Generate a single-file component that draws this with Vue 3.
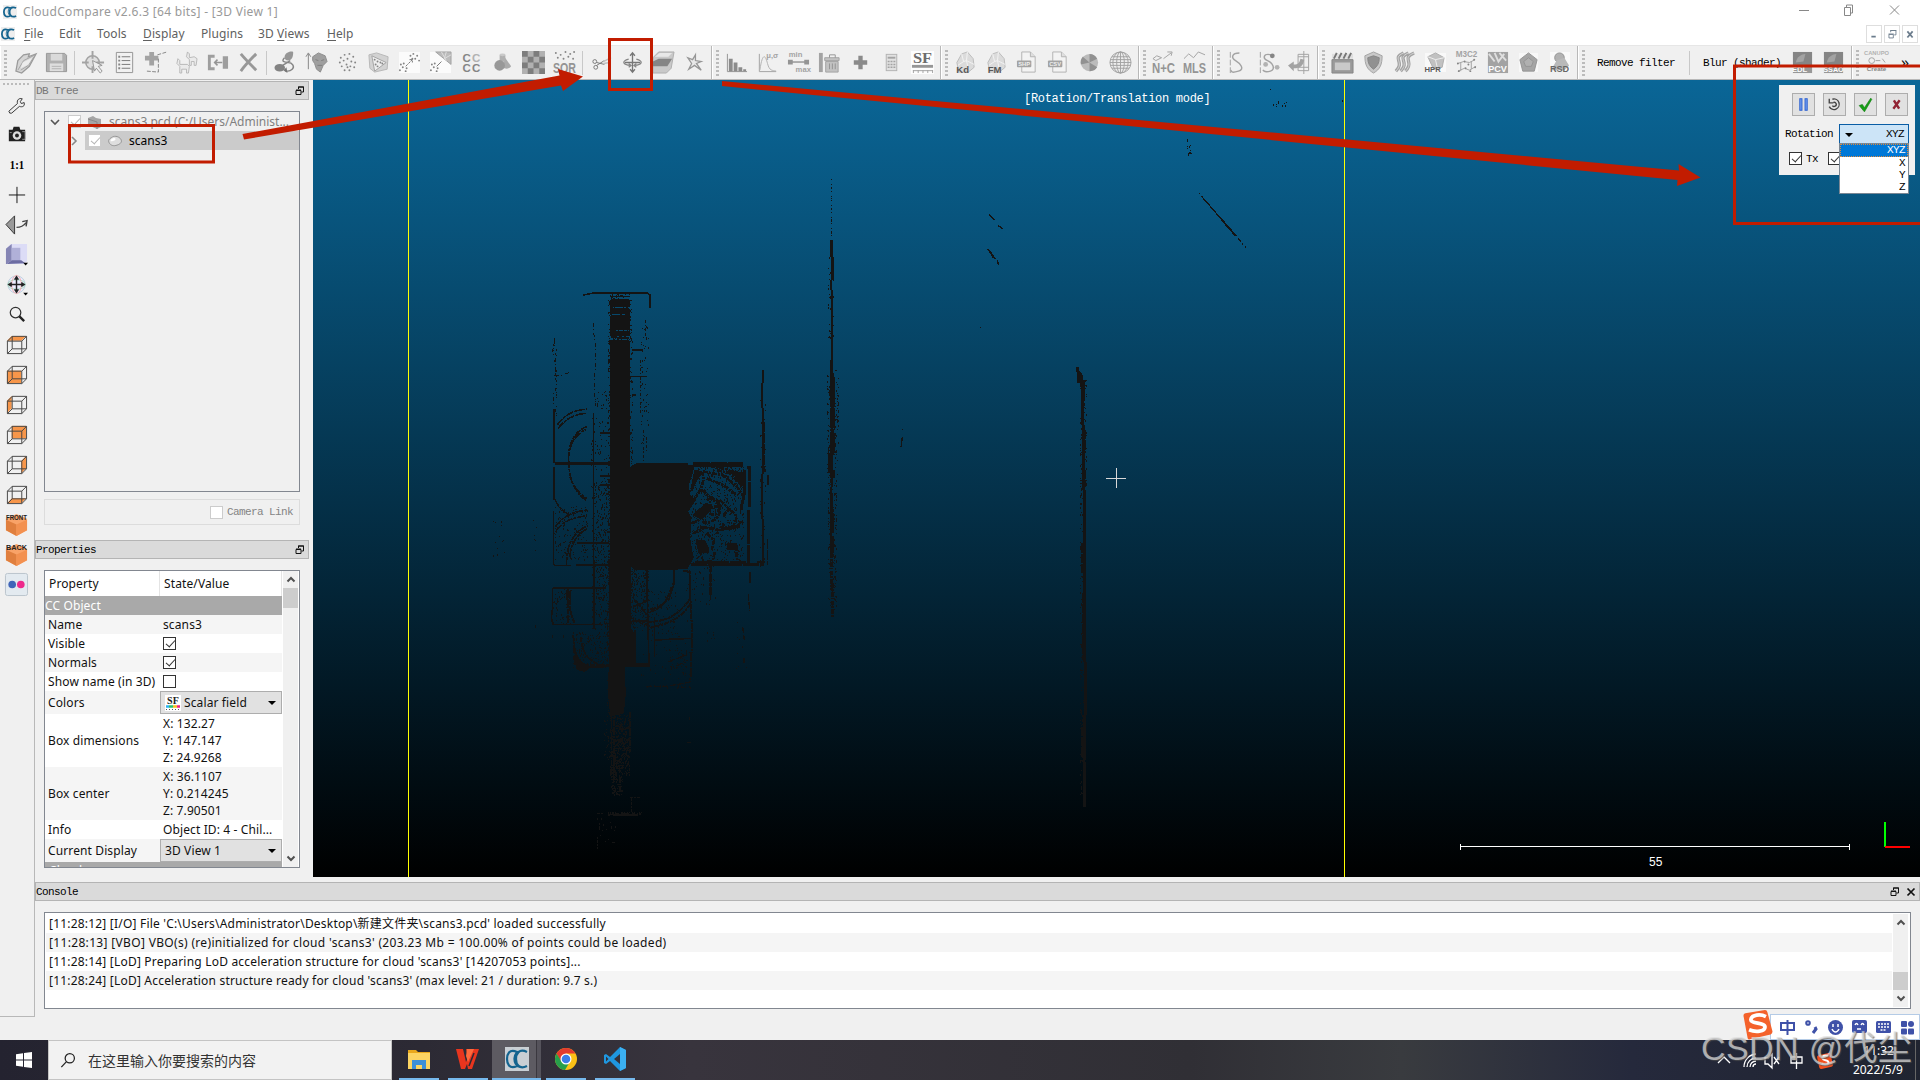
<template>
  <div class="desktop">
    <!-- Title bar -->
    <header class="title-bar">
      <svg class="app-icon" viewBox="0 0 16 16" v-html="glyphs.cc"></svg>
      <span class="title-text">CloudCompare v2.6.3 [64 bits] - [3D View 1]</span>
      <svg class="win-controls" viewBox="0 0 110 20">
        <path d="M9 10.500h10M54.500 7.500h6v8h-6zM56.500 7v-2h6v8h-2M100 5.500l9 9M109 5.500l-9 9" />
      </svg>
    </header>

    <!-- Menu bar -->
    <nav class="menu-bar">
      <svg class="app-icon" viewBox="0 0 16 16" v-html="glyphs.cc"></svg>
      <span v-for="m in menus" :key="m.text" class="menu-item" :class="m.cls">
        {{ m.pre }}<u v-if="m.key">{{ m.key }}</u>{{ m.post }}
      </span>
      <div class="mdi">
        <span class="mdi-btn"><svg viewBox="0 0 16 16"><path d="M5 11h5" stroke-width="2" /></svg></span>
        <span class="mdi-btn"><svg viewBox="0 0 16 16"><path d="M4.500 8.500h5v4h-5zM4 8h6M6.500 6v-2h6v5h-2M6 4h7" /></svg></span>
        <span class="mdi-btn"><svg viewBox="0 0 16 16"><path d="M5 5l6 7M11 5l-6 7" stroke-width="2" /></svg></span>
      </div>
    </nav>

    <!-- Main toolbars -->
    <div class="toolbars">
      <div v-for="(group, gi) in toolGroups" :key="gi" class="tool-group" :class="{ first: gi === 0 }">
        <i class="grip"></i>
        <template v-for="(name, i) in group" :key="i">
          <i v-if="name === '|'" class="sep"></i>
          <span v-else class="tool"><svg viewBox="0 0 24 24" v-html="icons[name]"></svg></span>
        </template>
      </div>
      <div class="tool-group filters">
        <i class="grip"></i>
        <span class="bitmap filter-btn">Remove filter</span>
        <i class="sep"></i>
        <span class="bitmap filter-btn blur">Blur (shader)</span>
        <span class="tool"><svg viewBox="0 0 24 24" v-html="icons.edl"></svg></span>
        <span class="tool"><svg viewBox="0 0 24 24" v-html="icons.ssao"></svg></span>
      </div>
      <div class="tool-group last">
        <i class="grip"></i>
        <span class="tool"><svg viewBox="0 0 24 24" v-html="icons.canupo"></svg></span>
        <span class="more">»</span>
      </div>
    </div>

    <!-- Workspace -->
    <div class="workspace">
      <aside class="side-tools">
        <i class="side-grip"></i>
        <span v-for="name in sideTools" :key="name" class="side-tool">
          <svg viewBox="0 0 24 24" v-html="sideIcons[name]"></svg>
        </span>
      </aside>

      <div class="right-area">
        <div class="upper">
          <div class="docks">
            <div class="dock-title dim bitmap">
              <span>DB Tree</span>
              <svg viewBox="0 0 10 10"><path d="M1 4.500h5v4h-5zM1 4h5M3.500 3v-2h5v5h-2M3 1h6" /></svg>
            </div>
            <div class="tree">
              <div class="tree-row root">
                <svg class="arrow" viewBox="0 0 10 10"><path d="M1 3l4 4 4-4" /></svg>
                <i class="check ticked faint"></i>
                <svg class="node" viewBox="0 0 16 14"><path d="M1 3l5-2 3 2 5 1v8l-4 2-9-4z" fill="#a5a5a5" /><path d="M1 4l9 3v7" stroke="#888" fill="none" /></svg>
                <span>scans3.pcd (C:/Users/Administ...</span>
              </div>
              <div class="tree-row child">
                <svg class="arrow" viewBox="0 0 10 10"><path d="M3 1l4 4-4 4" /></svg>
                <div class="selected">
                  <i class="check ticked faint"></i>
                  <svg class="node cloud" viewBox="0 0 18 14"><path d="M2 8c-1-3 3-5 5-6 4-1 8 1 9 4s-2 5-6 6-7-1-8-4z" fill="#dedede" stroke="#8d8d8d" /><path d="M4 7c0-2 3-4 5-3s-1 4-5 3z" fill="#fff" /></svg>
                  <span>scans3</span>
                </div>
              </div>
            </div>
            <div class="camera-link bitmap">
              <i class="check faint"></i>
              <span>Camera Link</span>
            </div>

            <div class="dock-title bitmap">
              <span>Properties</span>
              <svg viewBox="0 0 10 10"><path d="M1 4.500h5v4h-5zM1 4h5M3.500 3v-2h5v5h-2M3 1h6" /></svg>
            </div>
            <div class="props">
              <div class="props-body">
                <div class="props-head"><span>Property</span><span>State/Value</span></div>
                <div class="section">CC Object</div>
                <div v-for="(row, i) in properties" :key="row.label" class="prop" :class="[row.kind, { alt: i % 2 === 0 }]">
                  <span class="prop-label">{{ row.label }}</span>
                  <div class="prop-value">
                    <i v-if="row.kind === 'bool'" class="check" :class="{ ticked: row.value }"></i>
                    <div v-else-if="row.kind === 'combo'" class="combo">
                      <svg v-if="row.icon" viewBox="0 0 16 16" v-html="glyphs.sf"></svg>
                      <span>{{ row.value }}</span>
                      <b class="caret"></b>
                    </div>
                    <template v-else-if="row.kind === 'vector'">
                      <span v-for="v in row.value" :key="v">{{ v }}</span>
                    </template>
                    <span v-else>{{ row.value }}</span>
                  </div>
                </div>
                <div class="section clipped">Cloud</div>
              </div>
              <div class="scroll">
                <svg viewBox="0 0 10 10"><path d="M1.500 6.500l3.500-3.500 3.500 3.500" /></svg>
                <i class="thumb"></i>
                <svg class="down" viewBox="0 0 10 10"><path d="M1.500 3.500l3.500 3.500 3.500-3.500" /></svg>
              </div>
            </div>
          </div>

          <!-- 3D view -->
          <main class="view">
            <svg class="scene" viewBox="313 80 1607 797" shape-rendering="crispEdges">
              <path d="M408.500 80v797M1344.500 80v797" stroke="#ffff00" />
              <path :d="specks" fill="#141414" />
              <!-- upper half of the building -->
              <g transform="translate(520 270) scale(.33333)" fill="none" stroke="#141414" stroke-width="3">
                <path d="M272 90h56v20h-50v6h50v16h-56zM272 138h56v42h-40v5h40v12h-56zM270 212h58v780h-55z" fill="#141414" />
                <path d="M290 205h38M272 200h20" stroke-width="6" />
                <path d="M330 592l22-12h150v6h22v-6h145v10h-148l-6 26-10 30 4 30 18 14-18 26-6 8 10 20-4 60 10 60-16 30-60 6-90-2-24-10z" fill="#141414" />
                <path d="M190 75l30-6h162l8 6v40M272 80h58M103 418v160M103 590v100M101 722v160l5 5h46M221 430v560M105 578h166M104 583h166" stroke-width="5" />
                <path d="M104 205l-6 40 8 20v45l4 40-10 20v40M105 318l20-3 25-8M220 160v20l8 60-6 130 12 40" stroke-dasharray="12 6 3 9" />
                <path d="M112 465c20-30 50-46 88-47M114 476c22-30 50-44 86-46M146 570c-2-50 20-90 56-100M150 540c5-30 25-50 48-62M146 570c0 60 20 100 56 124M150 620c12 34 30 54 52 66M105 688c10 24 24 38 44 46M106 770c26-36 60-46 98-50M108 782c24-30 50-40 92-44M140 885c-2-60 20-100 64-118M150 860c2-40 24-70 52-84" stroke-width="5" stroke-dasharray="24 3 9 2" />
                <path d="M520 580h150M680 592h8v120M687 720v165M512 884h220M525 878h165M675 600v60l-12 60" stroke-width="9" stroke-dasharray="50 2" />
                <path d="M524 640c10-30 30-40 26-10s-30 60-36 70M548 604l60 12 40 30 20 30M570 588l50 10 46 50M560 625l50 20 40 30M590 600l60 15 18 40M545 660l60 50M514 760c40-10 60-60 80-50s-10 60-50 45M560 690c20-10 45 0 38 25s-30 25-38 0M612 740c4-30 36-20 36 5s-30 40-40 15M600 690l40 40M540 770l60 10 60-10M520 790l40-20M600 770c30 15 58 0 64-20M530 815l20 60M620 830h30v30M585 845l-10 40M560 790l22 20-6 30" stroke-width="8" stroke-dasharray="16 3 7 2" />
                <path d="M530 812h24l12 24v12h-30zM622 820h28v20h-26zM556 700l20 5-6 20-30 20-20-10zM524 600l20 5-20 40-12 20zM630 600l40 10v40z" fill="#141414" />
                <path d="M728 300v40M727 340v60l2 50v120l-3 90 4 220" stroke-width="6" />
                <path d="M732 455v90l3 60M744 615v30M742 808v78M710 876h24" stroke-width="4" stroke-dasharray="30 3" />
                <path d="M335 320h45M335 240h34M240 490h30M240 618h30M240 645h30M172 820h96M168 886h100M100 954h158M98 954v40M335 376h12" stroke-width="5" />
                <path d="M370 480v100M376 150v30l4 30M363 270v160M380 500v50" stroke-dasharray="9 5 4 7" />
                <path d="M381 900v92M460 900l3 40-18 52M508 900l4 92M572 890v100M690 905v35M141 960v30" stroke-width="5" />
              </g>
              <!-- lower half of the building -->
              <g transform="translate(520 560) scale(.33333)" fill="none" stroke="#141414" stroke-width="3">
                <path d="M270 0h62v210l14 10v100h-34l4 80-6 60-38 8-8-80 4-70z" fill="#141414" />
                <path d="M98 84h160M98 84v60l-4 30 6 20M98 194h150M222 0v206M381 30l2 130 4 155M404 170v120M345 210v100M335 184h45M405 240l110-5M300 314h88" stroke-width="5" />
                <path d="M143 88v100M152 90c-6 40-3 70 12 98M463 30c2 50-14 110-72 118M455 80c-10 35-30 70-70 76M512 130c-25 40-60 62-122 72M508 120c-30 40-60 62-118 66M490 32l20 4 2 110 5 70-6 150M160 226l6 90M182 230c6 50 20 72 60 86M345 120l40 50M340 140l48-20M180 316h80" stroke-width="6" stroke-dasharray="17 2 8 2" />
                <path d="M160 230c6 60 20 80 48 90l60-6v6l-60 4-14 10-24-6zM350 310h38v10h-40z" fill="#141414" />
                <path d="M571 0v120M690 40v30M685 102l4 50M668 200l5 40M672 295v15M377 380h60l74-14M445 305l55-20M470 318l26-12M508 470v10M502 547h12" stroke-width="4" stroke-dasharray="20 4" />
                <path d="M572 0v110" stroke-width="9" stroke-dasharray="24 4 8 5" />
                <path d="M275 460v200M330 455v120M290 500h20M290 540h40M280 565h45M280 610h20M300 650v50M282 480v180" stroke-width="4" stroke-dasharray="18 3 5 2" />
                <path d="M268 763h95M232 760h16M330 712h30M334 715v44M240 788v20M232 840v28M255 846h4M276 848h8M46 195v10M97 226v10M132 226v12" stroke-dasharray="8 3" />
                <path d="M280 764h70" stroke-width="6" />
              </g>
              <!-- walls to the right -->
              <g transform="translate(800 160) scale(.33333)" fill="none" stroke="#141414" stroke-width="3">
                <path d="M94 57v60M94 120v110" stroke-dasharray="3 12 3 5 8 4" />
                <path d="M95 240v50M98 290v70M94 360v30M97 390v120M96 510v80M96 590v70M98 640v70M97 700v110M98 810v75M94 880v60M97 930v50M94 980v200" stroke-width="7" />
                <path d="M98 310v50M96 600v50" stroke-width="9" />
                <path d="M97 650v160M99 820v65M93 880v60M98 930v25" stroke-width="15" stroke-dasharray="60 2 30 3" />
                <path d="M98 1060v120M95 1000v90" stroke-width="10" stroke-dasharray="60 9" />
                <path d="M95 1180v110M97 1270v100" stroke-width="9" stroke-dasharray="14 3 5 4" />
                <path d="M833 622v12l10 10 5 60v60l2 60v120l4 90v350l2 240-4 180 2 136" stroke-width="9" />
                <path d="M848 660v60M853 810v70M852 930v50M836 640v30M850 1150v90M849 1700v90M852 1300v200" stroke-width="12" stroke-dasharray="28 3" />
                <path d="M1198 100h2M1204 108l104 120M1313 236l10 8M1326 250l4 4M1336 258v6M568 163l16 18M594 196l14 10M562 266l24 30M592 300l3 14M307 807v3M307 832l-4 30M540 502h3" stroke-width="4" />
                <path d="M568 272l14 22M1264 178l44 50" stroke-width="6" />
              </g>
              <path class="cursor" d="M1106 478.500h20M1116.500 468v20" />
              <path d="M1460 846.500h390M1460.500 843.500v6M1849.500 843.500v6" stroke="#fff" fill="none" />
              <path d="M1885 822v25" stroke="#00ff00" stroke-width="2" />
              <path d="M1885 847h25" stroke="#ff0000" stroke-width="2" />
            </svg>
            <span class="mode-label">[Rotation/Translation mode]</span>
            <span class="scale-label">55</span>

            <!-- transform tool panel -->
            <div class="transform">
              <div class="transform-btns">
                <span><svg viewBox="0 0 20 20"><path d="M6.500 4.500h2v11h-2zM11.500 4.500h2v11h-2z" fill="#7ba6f5" stroke="#2a5fd0" /></svg></span>
                <span><svg viewBox="0 0 20 20"><path d="M8 5a5 5 0 1 1-3 7M9 8a2 2 0 1 1-1 3M5 4.500v4h4" fill="none" stroke="#444" stroke-width="1.300" /></svg></span>
                <span><svg viewBox="0 0 20 20"><path d="M4 11l3-1 2 3 6-9 1 1-7 12z" fill="#16a016" stroke="#0c7a0c" stroke-width=".6" /></svg></span>
                <span><svg viewBox="0 0 20 20"><path d="M7.500 6l5 8M13 6l-6 8" stroke="#922434" stroke-width="2.300" /></svg></span>
              </div>
              <div class="transform-row bitmap">
                <span>Rotation</span>
                <div class="axis-combo">
                  <b class="caret"></b><span>XYZ</span>
                  <ul class="axis-list">
                    <li v-for="a in ['XYZ', 'X', 'Y', 'Z']" :key="a" :class="{ current: a === 'XYZ' }">{{ a }}</li>
                  </ul>
                </div>
              </div>
              <div class="transform-row checks bitmap">
                <i class="check ticked"></i><span>Tx</span><i class="check ticked"></i>
              </div>
            </div>
          </main>
        </div>

        <!-- Console -->
        <section class="console">
          <div class="dock-title bitmap">
            <span>Console</span>
            <svg viewBox="0 0 10 10"><path d="M1 4.500h5v4h-5zM1 4h5M3.500 3v-2h5v5h-2M3 1h6" /></svg>
            <svg viewBox="0 0 10 10"><path d="M1.500 1.500l7 7M8.500 1.500l-7 7" stroke-width="1.700" /></svg>
          </div>
          <div class="log">
            <div class="log-lines">
              <p v-for="line in logLines" :key="line">{{ line }}</p>
            </div>
            <div class="scroll">
              <svg viewBox="0 0 10 10"><path d="M1.500 6.500l3.500-3.500 3.500 3.500" /></svg>
              <i class="thumb low"></i>
              <svg class="down" viewBox="0 0 10 10"><path d="M1.500 3.500l3.500 3.500 3.500-3.500" /></svg>
            </div>
          </div>
        </section>
      </div>
    </div>

    <!-- Taskbar -->
    <footer class="taskbar">
      <span class="start"><svg viewBox="0 0 16 16"><path d="M0 2.300l7-1v6.200H0zM8 1.100L16 0v7.500H8zM0 8.500h7v6.200l-7-1zM8 8.500h8V16l-8-1.100z" fill="#fff" /></svg></span>
      <div class="search">
        <svg viewBox="0 0 18 18"><circle cx="11" cy="6.500" r="5.200" /><path d="M7.300 10.300L1.500 16.500" /></svg>
        <span>在这里输入你要搜索的内容</span>
      </div>
      <span v-for="name in taskApps" :key="name" class="task-app" :class="name">
        <svg viewBox="0 0 24 24" v-html="taskIcons[name]"></svg>
      </span>
      <div class="tray">
        <svg class="tray-icons" viewBox="0 0 130 30">
          <path d="M4 17l6-6 6 6M33 21a9 9 0 0 1 9-9M30 21a13 13 0 0 1 12-13M36 21a6 6 0 0 1 6-6M39 21a3 3 0 0 1 3-3M51 12h3l4-4v14l-4-4h-3zM60 11l5 7M65 11l-5 7M77 11h11v6H77zM82.500 7v16" />
          <rect x="104" y="8" width="14" height="14" rx="2" fill="#f4511e" stroke="none" transform="rotate(-12 111 15)" />
          <path d="M114.500 10.500c-3-2-7-.5-6 2s6 1 6 4-5 3-7 1" stroke="#fff" stroke-width="2" />
        </svg>
        <div class="clock"><span>11:32</span><span>2022/5/9</span></div>
      </div>
    </footer>

    <!-- Input method bar -->
    <div class="ime">
      <svg viewBox="0 0 150 26">
        <g fill="none" stroke="#3f51a8" stroke-width="2">
          <path d="M10 8h13v7H10zM16.500 5v15" />
          <circle cx="37" cy="8" r="1.800" /><path d="M44 12l1 2-3 4" stroke-width="3" />
        </g>
        <g fill="#3f51a8">
          <circle cx="64.500" cy="12.500" r="7.500" />
          <rect x="81" y="5" width="15" height="13" rx="2" />
          <rect x="105" y="6" width="15" height="12" rx="1.500" />
          <rect x="130" y="6" width="6" height="6" rx="1" /><rect x="137" y="6" width="6" height="6" rx="3" />
          <rect x="130" y="13.500" width="6" height="6" rx="1" /><rect x="137" y="13.500" width="6" height="6" rx="1" />
        </g>
        <path d="M62 9v3M67 9v3M61 14c2 4 5 4 7 0M84 10c1-2 2-2 3 0M90 10c1-2 2-2 3 0M86 14h4" stroke="#fff" stroke-width="1.500" fill="none" />
        <path d="M107 9h11M107 12h11M109.500 15h6" stroke="#fff" stroke-width="1.500" stroke-dasharray="2 1" />
      </svg>
    </div>
    <svg class="sogou" viewBox="0 0 32 32">
      <path d="M1 6q0-2 2-2.500L24 0q2 0 2.500 2L32 23q0 2-2 3L9 31q-3 1-3.500-1z" fill="#f4622b" />
      <path d="M25 7c-6-3-15-2-16 3s15 3 15 8-10 6-17 3" fill="none" stroke="#fff" stroke-width="4" />
    </svg>
    <div class="watermark">CSDN @伐尘</div>

    <!-- Red annotation marks -->
    <svg class="marks" viewBox="0 0 1920 1080">
      <g fill="none" stroke="#c21c00" stroke-width="3">
        <path d="M69.500 125.500h144v36.500h-144zM609.500 39.500h42v50h-42zM1925 66h-190.500v157.500h190.500" />
      </g>
      <g fill="#c21c00">
        <path d="M242.500 134L559.500 75.500 558 69 583 76.500 563 91 561 85.500 244 139.500z" />
        <path d="M722 81L1679 170.500 1678.500 164 1700.500 177.500 1677 186 1677.500 180 722 86z" />
      </g>
    </svg>
  </div>
</template>

<script setup>
import { computed } from 'vue'

/* ------------------------
   Menu / toolbars
------------------------ */
const menus = [
  { text: 'File', pre: '', key: 'F', post: 'ile', cls: 'm-file' },
  { text: 'Edit', pre: 'Edit', cls: 'm-edit' },
  { text: 'Tools', pre: 'Tools', cls: 'm-tools' },
  { text: 'Display', pre: '', key: 'D', post: 'isplay', cls: 'm-display' },
  { text: 'Plugins', pre: 'Plugins', cls: 'm-plugins' },
  { text: '3D Views', pre: '3D ', key: 'V', post: 'iews', cls: 'm-views' },
  { text: 'Help', pre: '', key: 'H', post: 'elp', cls: 'm-help' },
]

const toolGroups = [
  ['open', 'save', '|', 'pick', 'list', 'level', 'clone', 'merge', 'remove', '|',
    'sheep', 'normals', 'sample', 'meshSample', 'c2c', 'c2m', 'cccc', 'primitive', 'checker', 'sor', '|',
    'segment', 'move', 'section', 'pointPick'],
  ['hist', 'stats', 'minmax', 'trash', 'plus', 'calc', 'sf'],
  ['kd', 'fm', 'shp', 'csv', 'pie', 'globe'],
  ['nc', 'mls'],
  ['curve', 'curvePts', 'unroll'],
  ['clap', 'shield', 'waves', 'hpr', 'm3c2', 'pcv', 'penta', 'rsd'],
]

const dots = pts => pts.map(([x, y]) => `<circle cx="${x}" cy="${y}" r="1" fill="#777"/>`).join('')
const label = (x, y, size, text, fill = '#777') =>
  `<text x="${x}" y="${y}" font-size="${size}" font-weight="bold" font-family="Liberation Sans, sans-serif" text-anchor="middle" fill="${fill}">${text}</text>`
const wide = (y, text) =>
  `<text x="0" y="${y}" font-size="16" font-weight="bold" textLength="24" lengthAdjust="spacingAndGlyphs" font-family="Liberation Sans, sans-serif" fill="#888">${text}</text>`
const doc = text =>
  `<path d="M6 1h9l5 5v16H6z" fill="#f4f4f4" stroke="#aaa"/><path d="M15 1v5h5" fill="#ddd" stroke="#aaa"/><rect x="1" y="10" width="15" height="7" rx="1" fill="#999"/>${label(8.5, 16, 6, text, '#eee')}`
const stones = '<path d="M3 12l5-9 6-2 6 7 1 9-6 5H5z" fill="#d9d9d9" stroke="#b5b5b5"/><path d="M8 3l2 8-6 4M14 1l-1 9 8 4M10 11l3-1 2 9" fill="none" stroke="#f3f3f3"/>'

const icons = {
  open: '<path d="M2 21L4 10l6-6 6-1-1 3 8-3-7 13-8 7z" fill="#d2d2d2" stroke="#8f8f8f" stroke-width="1.300"/><path d="M4 20l6-10L22 4M7 20l8-5 6-9" fill="none" stroke="#999"/><path d="M9 12l10-5-4 7-8 4z" fill="#ececec"/>',
  save: '<path d="M1.500 2.500h19l2 2v17h-21z" fill="#a8a8a8" stroke="#8b8b8b"/><path d="M6 3h12v7H6z" fill="#d8d8d8"/><path d="M5 13h14v8H5z" fill="#dcdcdc"/><path d="M7 16h10M7 18.500h10" stroke="#aaa"/>',
  pick: '<circle cx="11" cy="12" r="7" fill="#ddd" stroke="#999" stroke-width="1.600"/><path d="M11 0v8M11 16v7M0 12h7M15 12h8" stroke="#999" stroke-width="2"/><path d="M11 10l10 5-4 1 4 5-2 2-4-5-2 3z" fill="#eee" stroke="#888"/>',
  list: '<path d="M3.500 1.500h17v21h-17z" fill="#f2f2f2" stroke="#888"/><path d="M9 6h9M9 10h9M9 14h9M9 18h9" stroke="#666"/><path d="M5.500 6h2M5.500 10h2M5.500 14h2M5.500 18h2" stroke="#777" stroke-width="2"/>',
  level: '<path d="M8 1v14M1 7.500h14" stroke="#999" stroke-width="5"/><path d="M14 4l10-3M15 8v14l-12-1" fill="none" stroke="#777" stroke-dasharray="4 1.500"/>',
  clone: '<path d="M13 1l2 2v4l5-1 3 2-1 7h-2v-4h-3v4h-2v-6l-3-3zM3 8l2 2v4h8l2 2-1 7h-2v-4H7v4H5v-7l-3-3z" fill="#eaeaea" stroke="#aaa" stroke-width=".9"/>',
  merge: '<path d="M9 5.500H3.500v13H9M19 7h2.500v10H19z" fill="none" stroke="#939393" stroke-width="3"/><path d="M17 12H9M12 9l-3 3 3 3" fill="none" stroke="#888" stroke-width="1.600"/>',
  remove: '<path d="M4 3c5 6 10 11 16 17M20 3C15 8 9 14 4 21" stroke="#8c8c8c" stroke-width="3" fill="none"/>',
  sheep: '<ellipse cx="6" cy="17.500" rx="5.500" ry="4" fill="#747474"/><path d="M11 6c1-5 7-6 9-5 0 5-1 8-5 9-3 0-4-2-4-4z" fill="#8a8a8a"/><path d="M11 7c-4 4 0 5 4 5s7 4 4 7-7 2-8 1M17 10l-8 5" fill="none" stroke="#777" stroke-width="1.500"/><path d="M13 17l-3 3 4 3z" fill="#666"/>',
  normals: '<path d="M3.500 19V3M1 6l2.500-4L6 6" fill="none" stroke="#777"/><path d="M8 6l6-4 7 3 2 6-4 4-3 7-4-3-2-6-2-3z" fill="#949494" stroke="#7f7f7f"/><path d="M11 9l3 1M17 10l3-1M13 15h5" stroke="#6e6e6e"/>',
  sample: dots([[5, 7], [9, 4], [14, 3], [18, 6], [4, 12], [8, 10], [12, 8], [16, 11], [20, 12], [6, 16], [11, 14], [15, 16], [19, 17], [9, 20], [14, 20], [12, 17]]),
  meshSample: '<path d="M2 4l8-2 12 4-1 13-13 3-5-4z" fill="#cfcfcf" stroke="#b0b0b0"/><path d="M5 5l15 7-12 9z" fill="#eee" stroke="#999"/>' + dots([[8, 9], [11, 11], [14, 12], [9, 14], [11, 16], [16, 13]]),
  c2c: '<rect x="1" y="1" width="22" height="22" fill="#fdfdfd"/>' + dots([[16, 3], [20, 5], [13, 5], [18, 8], [22, 10], [15, 8], [3, 14], [5, 17], [2, 20], [8, 21], [6, 13], [9, 18]]) + '<path d="M8 16l7-7M12 9h3v3" fill="none" stroke="#666" stroke-dasharray="3 1"/>',
  c2m: '<rect x="1" y="1" width="22" height="22" fill="#fdfdfd"/><path d="M7 1h16v13z" fill="#b5b5b5" stroke="#999"/><path d="M13 1l5 9M18 1l-2 7 7-4" stroke="#ddd" fill="none"/>' + dots([[3, 14], [5, 17], [2, 20], [8, 21], [6, 13], [9, 18]]) + '<path d="M8 16l5-5" stroke="#666"/>',
  cccc: label(7, 11, 12, 'C') + label(17, 11, 12, 'C', '#aaa') + label(7, 22, 12, 'C') + label(17, 22, 12, 'C'),
  primitive: '<path d="M14 6l7 10c-2 3-6 3-9 1z" fill="#a2a2a2"/><path d="M9 4h6v7H9z" fill="#a8a8a8"/><ellipse cx="12" cy="4" rx="3" ry="1.500" fill="#c4c4c4"/><circle cx="9" cy="15" r="5.500" fill="#8c8c8c"/>',
  checker: '<path d="M0 0h24v24H0z" fill="#a9a9a9"/><path d="M0 0h6v6H0zM12 0h6v6h-6zM6 6h6v6H6zM18 6h6v6h-6zM0 12h6v6H0zM12 12h6v6h-6zM6 18h6v6H6zM18 18h6v6h-6z" fill="#6e6e6e"/>',
  sor: dots([[3, 2], [8, 4], [13, 1], [18, 3], [22, 1], [5, 7], [16, 6], [21, 8], [11, 8]]) + wide(23, 'SOR'),
  segment: '<circle cx="6" cy="17" r="2" fill="none" stroke="#666"/><circle cx="5" cy="11" r="2" fill="none" stroke="#666"/><path d="M7 15l8-5M7 12l8 2" stroke="#666" fill="none"/><path d="M14 11l8-4M14 13l7-1" stroke="#bbb" stroke-width="1.500"/>',
  move: '<path d="M12 2v20M4 12h16M9.500 5l2.500-3 2.500 3M9.500 19l2.500 3 2.500-3" fill="none" stroke="#666" stroke-width="1.400"/><path d="M8 8.500c-8 2-6 6 2 6.500M16 8.500c8 2 6 6-2 6.500M8 13l2.500 2L8 17M16 13l-2.500 2 2.500 2" fill="none" stroke="#777" stroke-width="1.300"/>',
  section: '<path d="M1 7l6-6h16l-3 17-5 5H1z" fill="#c4c4c4" stroke="#a5a5a5"/><path d="M1 11l6-3h14l-5 8H1z" fill="#777"/><path d="M3 6l5-4h13l-4 4z" fill="#e8e8e8"/>',
  pointPick: '<path d="M5 7l5 2 3-5 0 6 6 1-5 2 5 7-7-5-6 4 3-6z" fill="#e8e8e8" stroke="#8a8a8a" stroke-width="1.300"/>',
  hist: '<path d="M2.500 3v18.500H23" fill="none" stroke="#888"/><path d="M4 8h4v13H4zM9 12h4v9H9zM14 17h4v4h-4zM19 19h3v2h-3z" fill="#7e7e7e"/>',
  stats: '<path d="M3.500 3v18.500H21" fill="none" stroke="#999"/><path d="M4 20C7 0 10 5 12 13s5 7 9 8" fill="none" stroke="#aaa"/>' + label(17, 7, 8, 'μ,σ', '#999'),
  minmax: label(9, 6, 8, 'min', '#999') + label(17, 22, 8, 'max', '#999') + '<path d="M3 11.500h17" stroke="#888" stroke-width="1.500"/><path d="M1 9h5v5H1zM18 9h5v5h-5z" fill="#888"/>',
  trash: '<path d="M1 2h4v20H1z" fill="#999"/><path d="M7 7h15v3H7zM8 11h13v11H8z" fill="#bcbcbc" stroke="#999"/><path d="M12 13v6M15 13v6M18 13v6M12 7V4h6v3" fill="none" stroke="#888"/>',
  plus: '<path d="M12 5v14M5 12h14" stroke="#7c7c7c" stroke-width="4.500"/>',
  calc: '<rect x="6.500" y="3.500" width="11" height="17" fill="#e0e0e0" stroke="#aaa"/><path d="M8 7h8" stroke="#999" stroke-width="2"/><path d="M8 11h8M8 14h8M8 17h8" stroke="#999" stroke-width="1.500" stroke-dasharray="2 1"/>',
  sf: '<path d="M0 0h24v24H0z" fill="#fff"/><text x="2" y="13" font-size="16" font-weight="bold" textLength="20" lengthAdjust="spacingAndGlyphs" font-family="Liberation Serif, serif" fill="#5b5b5b">SF</text><path d="M1 16h22" stroke="#8a8a8a" stroke-width="3"/><path d="M2 20.500h21M2.500 20v3M7.500 20v3M12.500 20v3M17.500 20v3M22.500 20v3" stroke="#999" fill="none"/>',
  kd: stones + label(9, 23, 10, 'Kd', '#444'),
  fm: stones + label(10, 23, 10, 'FM', '#444'),
  shp: doc('SHP'),
  csv: doc('CSV'),
  pie: '<circle cx="12" cy="12" r="9" fill="#b4b4b4"/><path d="M12 12V3a9 9 0 0 1 8 5zM12 12l8 5a9 9 0 0 1-8 4zM12 12l-9 2a9 9 0 0 1 2-8z" fill="#858585"/>',
  globe: '<circle cx="12" cy="12" r="11" fill="#ededed" stroke="#999"/><path d="M12 1v22M1 12h22M3 6h18M3 18h18M2 9h20M2 15h20" stroke="#999"/><ellipse cx="12" cy="12" rx="4" ry="11" fill="none" stroke="#999"/><ellipse cx="12" cy="12" rx="8" ry="11" fill="none" stroke="#999"/>',
  nc: '<path d="M1 8l4-3 5 2-6 3zM12 8l8-6M16 1h5l-1 4" fill="none" stroke="#999"/>' + wide(23, 'N+C'),
  mls: '<path d="M1 8l5-5 5 4 5-6 7 3" fill="none" stroke="#999"/>' + wide(23, 'MLS'),
  curve: '<path d="M4.500 1v22" stroke="#999" stroke-dasharray="6 2"/><path d="M14 2c-8 0-9 5-4 8s10 9 3 11-7 1-8-1" fill="none" stroke="#999" stroke-width="1.500"/>',
  curvePts: '<path d="M3.500 1v22" stroke="#999" stroke-dasharray="6 2"/><path d="M15 4c-9-2-9 4-4 6s9 9 3 11-6 0-8-1" fill="none" stroke="#999" stroke-width="1.500"/><circle cx="16" cy="5" r="2.500" fill="#777"/><circle cx="9" cy="14" r="2.500" fill="#aaa"/><circle cx="21" cy="17" r="2.500" fill="#aaa"/>',
  unroll: '<path d="M10.500 3.500h11v17h-11zM10.500 6h11M10.500 17h11M16.500 0v24" fill="none" stroke="#999"/><path d="M0 15l6-4v3c5 0 6-2 7-6l4 1c-1 6-4 9-11 9v3z" fill="#999"/>',
  clap: '<path d="M1 9h22v14H1z" fill="#8e8e8e" stroke="#777"/><path d="M4 12h16v8H4z" fill="#c4c4c4"/><path d="M1 3h22v5H1z" fill="#ddd"/><path d="M3 8l3-6M8 8l3-6M13 8l3-6M18 8l3-6" stroke="#666" stroke-width="2"/>',
  shield: '<path d="M12 1l9 4c0 9-2 14-9 18C5 19 3 14 3 5z" fill="#c4c4c4" stroke="#999"/><path d="M12 5l6 2c0 6-2 9-6 12-4-3-6-6-6-12z" fill="#858585" stroke="#777"/>',
  waves: '<path d="M11 2C-2 8 13 11 3 21M16 2C3 8 18 11 8 21M22 2C8 8 23 11 13 21" fill="none" stroke="#999" stroke-width="3.500"/><path d="M11 2C-2 8 13 11 3 21M16 2C3 8 18 11 8 21M22 2C8 8 23 11 13 21" fill="none" stroke="#d2d2d2"/>',
  hpr: '<path d="M1 2h22v20H1z" fill="#fbfbfb"/><path d="M4 6l8-4 9 5-2 10-9 2z" fill="#bbb" stroke="#a4a4a4"/><path d="M4 6l8 3 9-2M12 9l2 9" stroke="#eee" fill="none"/>' + label(9, 22, 8, 'HPR', '#444'),
  m3c2: label(12, 6, 8.5, 'M3C2', '#999') + '<path d="M3 13l6-2 6 1 6-3M3 21l7-3 5 2 7-4M6 12v9M17 11v8" fill="none" stroke="#999"/>' + dots([[3, 13], [10, 11], [20, 9], [4, 21], [11, 18], [21, 17], [16, 21], [14, 14]]),
  pcv: '<path d="M2 1h21v22H2z" fill="#999"/><path d="M3 3l6 8M9 2l4 9 6-8M14 2l7 8" stroke="#ddd" fill="none" stroke-width="2"/>' + label(12, 22, 9.5, 'PCV', '#fff'),
  penta: '<path d="M2 2h20v20H2z" fill="#fafafa"/><path d="M12 2l9 7-3 12H6L3 9z" fill="#9b9b9b" stroke="#888"/><path d="M12 7l5 4-2 5H9l-2-5z" fill="#a8a8a8" stroke="#888"/>',
  rsd: '<path d="M2 1h21v21H2z" fill="#fbfbfb"/><circle cx="12" cy="7" r="5" fill="#aaa" stroke="#888"/><path d="M9 10l8-3 5 8-5 5H3z" fill="#b2b2b2"/>' + label(12, 22, 9.5, 'RSD', '#555'),
  edl: '<path d="M2 1h20v14H2z" fill="#777"/><path d="M5 12c1-6 6-9 10-9l-2 8z" fill="#999"/><path d="M2 15h20v8H2z" fill="#8c8c8c"/>' + label(9, 22, 8, 'EDL', '#fff'),
  ssao: '<path d="M2 1h20v14H2z" fill="#777"/><path d="M5 12c1-6 6-9 10-9l-2 8z" fill="#999"/><path d="M2 15h20v8H2z" fill="#8c8c8c"/>' + label(12, 22, 7.5, 'SSAO', '#fff'),
  canupo: label(12, 4, 6, 'CANUPO', '#aaa') + '<circle cx="7" cy="10" r="3" fill="none" stroke="#999"/><path d="M11 10h5M18 8l3 4" stroke="#999"/>' + label(12, 21, 6.5, 'Create', '#777'),
}

/* ------------------------
   Left toolbar
------------------------ */
const sideTools = ['wrench', 'camera', 'one', 'cross', 'persp', 'cube', 'rotate', 'zoom',
  'top', 'front', 'left', 'back', 'right', 'bottom', 'isoFront', 'isoBack', 'stereo']

const wires = '<path d="M2.500 8.500h15v13h-15zM7.500 3.500h15v13h-15zM2.500 8.500l5-5M17.500 8.500l5-5M2.500 21.500l5-5M17.500 21.500l5-5" fill="none" stroke="#444"/>'
const box = face => `<path d="${face}" fill="#f7964a"/>${wires}`
const iso = text =>
  `<path d="M1 6l11-5 11 5v12l-11 6-11-6z" fill="#f9a368"/><path d="M1 7l11 5v12l-11-6z" fill="#e07f3e"/><path d="M12 12l11-5v11l-11 6z" fill="#f39150"/><text x="1" y="7.500" font-size="7.500" font-weight="bold" textLength="22" lengthAdjust="spacingAndGlyphs" font-family="Liberation Sans, sans-serif" fill="#222">${text}</text>`

const sideIcons = {
  wrench: '<path d="M5 21l-1-2 9-8c-1-4 2-6 5-5l-2 3 1 2 3-1c1 4-2 5-5 4L7 21z" fill="#eee" stroke="#333"/>',
  camera: '<path d="M4 7h4l1-3h6l1 3h5v12H4z" fill="#222"/><circle cx="12.500" cy="13" r="4.500" fill="#ddd"/><circle cx="12.500" cy="13" r="2" fill="#222"/><path d="M5 10h2M18 9h3v8h-3" stroke="#999" fill="none"/>',
  one: '<text x="5" y="16.500" font-size="13" font-weight="bold" textLength="15" lengthAdjust="spacingAndGlyphs" font-family="Liberation Serif, serif" fill="#000">1:1</text>',
  cross: '<path d="M4 12.500h17M12.500 4v17" stroke="#111"/>',
  persp: '<path d="M1 12l9-9v19z" fill="#999" stroke="#333"/><path d="M12 15c4 0 7-1 10-5M18 9l5-1-1 6" fill="none" stroke="#444" stroke-width="1.500"/>',
  cube: '<path d="M1 6l5-5h17v18l-4 3H1z" fill="#dcdcf6"/><path d="M1 6l6-5v17l-5 4H1z" fill="#8585b4"/><path d="M7 5h9v14H7z" fill="#b0b0d8"/><path d="M2 22l5-4h10l4 3z" fill="#6c6ca2"/><path d="M19 20.500h5l-2.500 3z" fill="#000"/>',
  rotate: '<circle cx="12" cy="12" r="9" fill="#eef" stroke="#bcd"/><ellipse cx="12" cy="12" rx="9" ry="5" fill="none" stroke="#9dd5b5"/><ellipse cx="12" cy="12" rx="5" ry="9.500" fill="none" stroke="#f2b0b0"/><path d="M12 5v14M5 12h14M10 7l2-3 2 3M10 17l2 3 2-3M7 10l-3 2 3 2M17 10l3 2-3 2" stroke="#222" stroke-width="1.500" fill="none"/><path d="M19 20.500h5l-2.500 3z" fill="#000"/>',
  zoom: '<circle cx="11" cy="10" r="5.500" fill="#f2f2f2" stroke="#333" stroke-width="1.300"/><path d="M15 14l5 5" stroke="#222" stroke-width="2.500"/>',
  top: box('M2 8l5-5h15l-5 5z'),
  front: box('M2 8h15v13H2z'),
  left: box('M2 8l5-5v13l-5 5z'),
  back: box('M7 3h15v13H7z'),
  right: box('M17 8l5-5v13l-5 5z'),
  bottom: box('M2 21l5-5h15l-5 5z'),
  isoFront: iso('FRONT'),
  isoBack: iso('BACK'),
  stereo: '<rect x=".5" y=".5" width="23" height="23" rx="2" fill="#e3eaf0" stroke="#b9c3cc"/><circle cx="7.500" cy="12" r="4" fill="#4065b8"/><circle cx="16.500" cy="12" r="4" fill="#ee2a8c"/>',
}

/* ------------------------
   Small glyphs
------------------------ */
const glyphs = {
  cc: '<path d="M0 0h16v16H0z" fill="#eee"/><path d="M8 3.500C3 1 1 5 1 8s2 7 7 4.500M15 3.500c-5-2.500-7.500 1-7.500 4.500s2.500 7 7.500 4.500" fill="none" stroke="#14648f" stroke-width="2"/><path d="M11 2.500c-6-1-7 9-1 11" fill="none" stroke="#14648f"/>',
  sf: '<path d="M0 0h16v16H0z" fill="#fff"/><text x="2" y="9" font-size="10" font-weight="bold" font-family="Liberation Serif, serif" fill="#222">SF</text><path d="M1 11.500h3" stroke="#2ab0f0" stroke-width="2.500"/><path d="M4 11.500h4" stroke="#28c070" stroke-width="2.500"/><path d="M8 11.500h4" stroke="#f4c020" stroke-width="2.500"/><path d="M12 11.500h3" stroke="#f02080" stroke-width="2.500"/><path d="M1 14.500h15" stroke="#555" stroke-dasharray="1 2"/>',
}

/* ------------------------
   Properties / console
------------------------ */
const properties = [
  { label: 'Name', value: 'scans3', kind: 'text' },
  { label: 'Visible', value: true, kind: 'bool' },
  { label: 'Normals', value: true, kind: 'bool' },
  { label: 'Show name (in 3D)', value: false, kind: 'bool' },
  { label: 'Colors', value: 'Scalar field', kind: 'combo', icon: true },
  { label: 'Box dimensions', value: ['X: 132.27', 'Y: 147.147', 'Z: 24.9268'], kind: 'vector' },
  { label: 'Box center', value: ['X: 36.1107', 'Y: 0.214245', 'Z: 7.90501'], kind: 'vector' },
  { label: 'Info', value: 'Object ID: 4 - Chil...', kind: 'text' },
  { label: 'Current Display', value: '3D View 1', kind: 'combo' },
]

const logLines = [
  "[11:28:12] [I/O] File 'C:\\Users\\Administrator\\Desktop\\新建文件夹\\scans3.pcd' loaded successfully",
  "[11:28:13] [VBO] VBO(s) (re)initialized for cloud 'scans3' (203.23 Mb = 100.00% of points could be loaded)",
  "[11:28:14] [LoD] Preparing LoD acceleration structure for cloud 'scans3' [14207053 points]...",
  "[11:28:24] [LoD] Acceleration structure ready for cloud 'scans3' (max level: 21 / duration: 9.7 s.)",
]

/* ------------------------
   Taskbar
------------------------ */
const taskApps = ['explorer', 'wps', 'compare', 'chrome', 'code']
const taskIcons = {
  explorer: '<path d="M1 3h8l2 2h12v17H1z" fill="#e9a81c"/><path d="M1 6h22v16H1z" fill="#fcd462"/><path d="M5 22v-9h14v9h-4v-4H9v4z" fill="#3d8fd8"/>',
  wps: '<path d="M0 2h7l3 13 4-9h-3l-1-4h13l-7 20h-4l-1-5-2 5H5z" fill="#e8351e"/><path d="M11 2h7l-6 13-2-6z" fill="#ff6a3c"/><path d="M18 6l-5 13" stroke="#2c2a35" stroke-width="1.500"/>',
  compare: '<path d="M0 0h24v24H0z" fill="#c9cfd4"/><path d="M12 5C4 1 2 8 2 12s2 11 10 7M22 5c-8-4-11 2-11 7s3 11 11 7M16 4C8 4 7 18 15 20" fill="none" stroke="#14648f" stroke-width="2.200"/>',
  chrome: '<circle cx="12" cy="12" r="11" fill="#fbc116"/><path d="M2.500 6.500A11 11 0 0 1 21.500 6.500H12L7 15z" fill="#e33b2e"/><path d="M2.500 6.500A11 11 0 0 0 11 23l5-8.500H7.500z" fill="#269f4b"/><circle cx="12" cy="12" r="5.500" fill="#fff"/><circle cx="12" cy="12" r="4.300" fill="#3b7de8"/>',
  code: '<path d="M17 0l6 3v18l-6 3L7 14l-4 3-2-1v-8l2-1 4 3zM17 7l-6 5 6 5zM3 9.500v5L5.500 12z" fill="#1f97e0" fill-rule="evenodd"/><path d="M17 0l6 3v18l-6 3z" fill="#3bb0f2"/>',
}

/* ------------------------
   Point cloud specks
   [x, y, width, height, count]
------------------------ */
const regions = [
  [608, 294, 24, 50, 260], [608, 340, 3, 260, 160], [629, 340, 4, 300, 160],
  [591, 390, 18, 110, 90], [592, 480, 18, 150, 420], [553, 340, 4, 80, 30],
  [554, 505, 34, 55, 150], [641, 320, 8, 130, 50], [690, 465, 54, 100, 620],
  [631, 568, 18, 60, 240], [607, 600, 4, 120, 90], [610, 715, 20, 60, 420],
  [611, 765, 12, 30, 110], [604, 720, 6, 40, 24], [648, 590, 30, 45, 60],
  [553, 588, 18, 36, 60], [573, 632, 40, 36, 190], [640, 620, 50, 60, 60],
  [827, 370, 12, 110, 190], [828, 480, 9, 130, 200], [828, 240, 6, 100, 50],
  [1080, 380, 7, 120, 130], [1080, 500, 6, 300, 190], [760, 400, 6, 170, 60],
  [686, 560, 30, 45, 36], [493, 520, 12, 40, 12], [533, 520, 4, 40, 6],
  [608, 812, 34, 3, 60], [596, 815, 20, 30, 14], [1187, 144, 5, 14, 12],
  [1273, 101, 14, 6, 10], [1187, 138, 3, 4, 2], [735, 620, 12, 70, 8],
  [645, 685, 46, 3, 24], [670, 650, 18, 20, 36], [707, 632, 8, 10, 6],
]

const specks = computed(() => {
  let seed = 20509
  const rand = () => {
    seed = (seed * 1103515245 + 12345) % 2147483648
    return seed / 2147483648
  }
  let d = 'M1270 89h1v1h-1zM1342 100h1v2h-1z'
  for (const [x, y, w, h, n] of regions) {
    for (let i = 0; i < n; i++) {
      const px = x + Math.floor(rand() * w)
      const py = y + Math.floor(rand() * h)
      const len = rand() > 0.7 ? 2 : 1
      d += `M${px} ${py}h1v${len}h-1z`
    }
  }
  return d
})
</script>

<style>
body {
  overflow: hidden;
}
</style>

<style scoped>
.desktop {
  position: relative;
  width: 1920px;
  height: 1080px;
  display: flex;
  flex-direction: column;
  overflow: hidden;
  background: #f0f0f0;
  color: #111;
  font: 12px/19px 'Noto Sans', 'Noto Sans CJK SC', sans-serif;
}

.desktop *,
.desktop {
  box-sizing: border-box;
}

.bitmap {
  font-family: 'Liberation Mono', monospace;
  font-size: 11px;
  letter-spacing: -0.6px;
  white-space: nowrap;
}

/* title and menu */
.title-bar {
  flex: 0 0 23px;
  display: flex;
  align-items: center;
  padding: 0 20px 0 3px;
  background: #fff;
  color: #999;
}

.app-icon {
  width: 14px;
  height: 14px;
}

.title-text {
  margin-left: 6px;
  letter-spacing: 0.3px;
}

.win-controls {
  width: 110px;
  height: 20px;
  margin: -3px 0 0 auto;
  fill: none;
  stroke: #888;
}

.menu-bar {
  flex: 0 0 22px;
  display: flex;
  align-items: center;
  padding: 0 2px 1px 1px;
  background: #fff;
  color: #606060;
}

.menu-item {
  white-space: nowrap;
  letter-spacing: 0.1px;
}

.menu-item u {
  text-underline-offset: 2px;
}

.m-file { width: 35px; margin-left: 9px; }
.m-edit { width: 38px; }
.m-tools { width: 46px; }
.m-display { width: 58px; }
.m-plugins { width: 57px; }
.m-views { width: 69px; }

.mdi {
  margin-left: auto;
  display: flex;
  gap: 2px;
}

.mdi-btn {
  width: 16px;
  height: 18px;
  border: 1px solid #dedede;
  display: flex;
}

.mdi-btn svg {
  fill: none;
  stroke: #6b7c8c;
}

/* toolbars */
.toolbars {
  flex: 0 0 35px;
  display: flex;
  border-top: 1px solid #e6e6e6;
  border-bottom: 1px solid #b8b8b8;
}

.tool-group {
  position: relative;
  display: flex;
  align-items: center;
  padding: 0 2px 0 0;
  border-right: 1px solid #b8b8b8;
  box-shadow: inset 1px 0 #fff;
}

.tool-group.first {
  padding-right: 1px;
}

.grip {
  width: 3px;
  height: 26px;
  margin: 0 2px 0 4px;
  background: repeating-linear-gradient(#bbb 0 2px, transparent 2px 4px);
}

.tool-group.first .grip {
  margin-right: 3px;
}

.sep {
  width: 1px;
  height: 24px;
  margin: 0 3px 0 2px;
  background: #c8c8c8;
}

.tool {
  width: 31px;
  display: flex;
  justify-content: center;
  opacity: 0.88;
}

.tool svg {
  width: 23px;
  height: 23px;
  overflow: visible;
}

.filter-btn {
  width: 90px;
  margin-left: 10px;
  padding-top: 2px;
  color: #000;
}

.filter-btn.blur {
  width: 84px;
}

.tool-group.last {
  flex: 1;
  border: 0;
}

.more {
  margin-left: 9px;
  font-size: 16px;
}

/* workspace */
.workspace {
  flex: 0 0 960px;
  display: flex;
}

.side-tools {
  flex: 0 0 35px;
  height: 937px;
  padding: 3px 2px 0 0;
  display: flex;
  flex-direction: column;
  align-items: center;
  border-right: 1px solid #b8b8b8;
  border-bottom: 1px solid #b8b8b8;
}

.side-grip {
  width: 27px;
  height: 2px;
  margin-bottom: 4px;
  background: repeating-linear-gradient(90deg, #bbb 0 2px, transparent 2px 4px);
}

.side-tool {
  height: 30px;
  display: flex;
  align-items: center;
}

.side-tool svg {
  width: 23px;
  height: 23px;
  overflow: visible;
}

.right-area {
  flex: 1;
  display: flex;
  flex-direction: column;
}

.upper {
  height: 797px;
  display: flex;
}

.docks {
  width: 278px;
  padding-top: 1px;
}

.dock-title {
  width: 274px;
  height: 19px;
  padding: 1px 3px 0 0;
  display: flex;
  align-items: center;
  gap: 6px;
  border: 1px solid #b4b4b4;
  background: #dadada;
  color: #000;
}

.dock-title.dim {
  color: #777;
}

.dock-title span {
  flex: 1;
}

.dock-title svg {
  width: 10px;
  height: 10px;
  fill: none;
  stroke: #111;
}

.tree {
  width: 256px;
  height: 381px;
  margin: 11px 0 7px 9px;
  border: 1px solid #828790;
}

.tree-row {
  height: 19px;
  display: flex;
  align-items: center;
  white-space: nowrap;
}

.tree-row.root {
  padding-left: 5px;
  color: #808080;
}

.tree-row.child {
  padding-left: 24px;
}

.arrow {
  width: 10px;
  height: 10px;
  fill: none;
  stroke: #555;
  stroke-width: 1.6;
}

.child .arrow {
  stroke: #888;
}

.selected {
  flex: 1;
  height: 19px;
  margin-left: 6px;
  padding-left: 3px;
  display: flex;
  align-items: center;
  background: #cbcbcb;
  color: #000;
}

.root .check {
  margin-left: 8px;
}

.node {
  width: 16px;
  height: 14px;
  margin: 0 6px 0 6px;
}

.check {
  width: 13px;
  height: 13px;
  flex: 0 0 13px;
  display: block;
  border: 1px solid #333;
  background: #fff;
}

.check.ticked::after {
  content: '';
  display: block;
  width: 4px;
  height: 8px;
  margin: 0 0 0 4px;
  border: solid #333;
  border-width: 0 1.3px 1.3px 0;
  transform: rotate(42deg);
}

.check.faint {
  border-color: #ccc;
}

.check.faint::after {
  border-color: #b5b5b5;
}

.camera-link {
  width: 256px;
  height: 26px;
  margin: 0 0 15px 9px;
  padding-right: 6px;
  display: flex;
  align-items: center;
  justify-content: flex-end;
  gap: 4px;
  border: 1px solid #dcdcdc;
  color: #848484;
}

.props {
  width: 256px;
  height: 298px;
  margin: 11px 0 0 9px;
  display: flex;
  border: 1px solid #828790;
  background: #fff;
  overflow: hidden;
}

.props-body {
  flex: 0 0 237px;
  margin-right: 1px;
  letter-spacing: 0.12px;
}

.props-head {
  height: 25px;
  display: grid;
  grid-template-columns: 115px 1fr;
  line-height: 25px;
}

.props-head span {
  padding-left: 4px;
  border-right: 1px solid #e4e4e4;
}

.section {
  height: 19px;
  background: #a9a9a9;
  color: #fff;
}

.section.clipped {
  height: 6px;
  overflow: hidden;
  padding-left: 4px;
  line-height: 17px;
}

.prop {
  height: 19px;
  display: grid;
  grid-template-columns: 114px 1fr;
  align-items: center;
}

.prop.alt {
  background: #f5f5f5;
}

.prop.vector {
  height: 53px;
}

.prop.combo {
  height: 23px;
}

.prop-label {
  padding-left: 3px;
  white-space: nowrap;
}

.prop-value {
  padding-left: 4px;
  display: flex;
  flex-direction: column;
  line-height: 17px;
  white-space: nowrap;
}

.prop.combo .prop-value {
  padding-left: 1px;
}

div.prop-value > .combo {
  height: 23px;
  padding: 0 5px 0 4px;
  display: flex;
  align-items: center;
  gap: 3px;
  border: 1px solid #adadad;
  background: #e1e1e1;
}

.combo > svg {
  width: 16px;
  height: 16px;
}

.caret {
  margin-left: auto;
  border: 4px solid transparent;
  border-top-color: #000;
  border-bottom: 0;
}

.scroll {
  width: 15px;
  height: 100%;
  padding: 3px 0;
  display: flex;
  flex-direction: column;
  align-items: center;
  background: #f0f0f0;
}

.scroll svg {
  width: 10px;
  height: 12px;
  fill: none;
  stroke: #505050;
  stroke-width: 2;
}

.scroll .down {
  margin-top: auto;
}

.thumb {
  width: 15px;
  height: 20px;
  margin-top: 2px;
  background: #cdcdcd;
}

.thumb.low {
  height: 18px;
  margin-top: 43px;
}

/* 3D view */
.view {
  position: relative;
  flex: 1;
  background: linear-gradient(#0a6697 0%, #043048 53%, #000 100%);
}

.scene {
  display: block;
  width: 1607px;
  height: 797px;
}

.cursor {
  stroke: #d8d8d8;
}

.mode-label {
  position: absolute;
  left: 711px;
  top: 10px;
  color: #fff;
  font: 12px/19px 'Liberation Mono', monospace;
  letter-spacing: -0.3px;
}

.scale-label {
  position: absolute;
  left: 1336px;
  top: 773px;
  color: #fff;
  font: 12px/19px 'Liberation Sans', sans-serif;
}

.transform {
  position: absolute;
  left: 1466px;
  top: 5px;
  width: 136px;
  height: 90px;
  padding: 8px 6px 0 6px;
  background: #f0f0f0;
}

.transform-btns {
  display: flex;
  gap: 8px;
  padding-left: 7px;
}

.transform-btns span {
  width: 23px;
  height: 23px;
  border: 1px solid #adadad;
  background: #e1e1e1;
}

.transform-btns svg {
  display: block;
  width: 21px;
  height: 21px;
}

.transform-row {
  height: 20px;
  margin-top: 8px;
  display: flex;
  align-items: center;
  justify-content: space-between;
  color: #000;
}

.transform-row > span {
  padding-top: 1px;
}

.axis-combo {
  position: relative;
  width: 70px;
  height: 20px;
  padding: 1px 4px 0 5px;
  display: flex;
  align-items: center;
  justify-content: space-between;
  border: 1px solid #0a5da5;
  background: #cce4f7;
}

.axis-combo .caret {
  margin: 0;
}

.axis-list {
  position: absolute;
  z-index: 1;
  left: -1px;
  top: 18px;
  width: 70px;
  height: 51px;
  margin: 0;
  padding: 0;
  border: 1px solid #7a8794;
  background: #fff;
  list-style: none;
  line-height: 12px;
  text-align: right;
}

.axis-list li {
  height: 12px;
  padding-right: 3px;
}

.axis-list .current {
  height: 13px;
  background: #0078d7;
  color: #fff;
  outline: 1px dotted #e08a3c;
  outline-offset: -1px;
}

.transform-row.checks {
  height: 13px;
  padding-left: 4px;
  justify-content: flex-start;
  gap: 4px;
}

.checks > span {
  width: 18px;
}

/* console */
.console {
  padding-top: 5px;
}

.console .dock-title {
  width: 1885px;
}

.log {
  width: 1867px;
  height: 97px;
  margin: 11px 0 0 9px;
  padding: 1px 2px 1px 1px;
  display: flex;
  border: 1px solid #828790;
  background: #fff;
}

.log-lines {
  flex: 1;
  margin-right: 1px;
  letter-spacing: 0.2px;
}

.log-lines p {
  height: 19px;
  margin: 0;
  padding-left: 3px;
  white-space: nowrap;
}

.log-lines p:nth-child(2) {
  letter-spacing: 0.33px;
}

.log-lines p:nth-child(even) {
  background: #f5f5f5;
}

/* taskbar */
.taskbar {
  flex: 0 0 40px;
  display: flex;
  background: linear-gradient(90deg, #242330, #2c2a34 22%, #38343d 36%, #302f35 62%, #393b3f 73%, #25293c 85%, #202430 100%);
}

.start {
  width: 48px;
  display: flex;
  align-items: center;
  justify-content: center;
}

.start svg {
  width: 16px;
  height: 16px;
}

.search {
  width: 344px;
  margin-right: 2px;
  padding-left: 11px;
  display: flex;
  align-items: center;
  gap: 12px;
  border: 1px solid #c4c4c4;
  background: #f2f2f2;
  color: #333;
  font-size: 14px;
  font-family: 'Noto Sans CJK SC', sans-serif;
}

.search svg {
  width: 16px;
  height: 17px;
  fill: none;
  stroke: #222;
  stroke-width: 1.4;
}

.task-app {
  width: 40px;
  height: 40px;
  margin: 0 4px 0 5px;
  display: flex;
  align-items: center;
  justify-content: center;
  border-bottom: 2px solid #76b9ed;
}

.task-app svg {
  width: 24px;
  height: 24px;
}

.task-app.compare {
  width: 49px;
  background: linear-gradient(90deg, #5d5b62 44px, #3a383f 44px 45px, #55535b 45px);
  margin: 0;
}

.tray {
  flex: 1;
  display: flex;
  justify-content: flex-end;
  padding-right: 4px;
}

.tray-icons {
  width: 130px;
  height: 30px;
  margin-top: 6px;
  fill: none;
  stroke: #fff;
  stroke-width: 1.3;
}

.clock {
  width: 72px;
  padding: 1px 12px 0 0;
  display: flex;
  flex-direction: column;
  border-right: 1px solid #666;
  color: #fff;
  text-align: right;
}

.clock span:first-child {
  padding-right: 9px;
}

/* overlays */
.ime {
  position: absolute;
  left: 1770px;
  top: 1014px;
  width: 150px;
  height: 26px;
  border: 1px solid #b4cbe6;
  background: #fff;
}

.ime svg {
  display: block;
  width: 150px;
  height: 26px;
}

.sogou {
  position: absolute;
  left: 1742px;
  top: 1010px;
  width: 31px;
  height: 30px;
}

.watermark {
  position: absolute;
  left: 1701px;
  top: 1026px;
  color: rgba(225, 225, 225, 0.7);
  font: 34px/44px 'Liberation Sans', 'Noto Sans CJK SC', sans-serif;
  letter-spacing: 0.4px;
  text-shadow: 1px 1px 1px rgba(80, 80, 80, 0.7);
  white-space: nowrap;
}

.marks {
  position: absolute;
  left: 0;
  top: 0;
  width: 1920px;
  height: 1080px;
}
</style>
